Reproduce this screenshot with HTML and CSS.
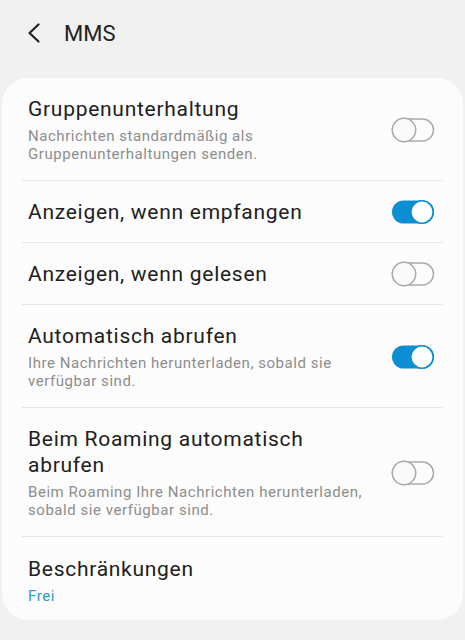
FILE: index.html
```html
<!DOCTYPE html>
<html lang="de">
<head>
<meta charset="utf-8">
<link rel="stylesheet" href="styles.css">
</head>
<body>
<header class="appbar">
  <svg class="back" width="14" height="20" viewBox="0 0 14 20"><polyline points="11.5,1.5 2.5,10 11.5,18.5" fill="none" stroke="#222" stroke-width="2.2" stroke-linecap="round" stroke-linejoin="round"/></svg>
  <h1 class="title">MMS</h1>
</header>
<main class="card">
  <div class="row">
    <div class="text">
      <div class="label">Gruppenunterhaltung</div>
      <div class="sub">Nachrichten standardmäßig als Gruppenunterhaltungen senden.</div>
    </div>
    <svg class="toggle" width="44" height="26" viewBox="0 0 44 26"><rect x="1.5" y="2" width="41" height="22" rx="11" fill="none" stroke="#a9a9a9" stroke-width="1.5"/><circle cx="13" cy="13" r="11.7" fill="#fafafa" stroke="#a9a9a9" stroke-width="1.5"/></svg>
  </div>
  <div class="row">
    <div class="text"><div class="label">Anzeigen, wenn empfangen</div></div>
    <svg class="toggle" width="44" height="26" viewBox="0 0 44 26"><rect x="1" y="1.5" width="42" height="23" rx="11.5" fill="#0b8fd2"/><circle cx="31" cy="13" r="11.2" fill="#fff" stroke="#0b8fd2" stroke-width="1.6"/></svg>
  </div>
  <div class="row">
    <div class="text"><div class="label">Anzeigen, wenn gelesen</div></div>
    <svg class="toggle" width="44" height="26" viewBox="0 0 44 26"><rect x="1.5" y="2" width="41" height="22" rx="11" fill="none" stroke="#a9a9a9" stroke-width="1.5"/><circle cx="13" cy="13" r="11.7" fill="#fafafa" stroke="#a9a9a9" stroke-width="1.5"/></svg>
  </div>
  <div class="row">
    <div class="text">
      <div class="label">Automatisch abrufen</div>
      <div class="sub">Ihre Nachrichten herunterladen, sobald sie verfügbar sind.</div>
    </div>
    <svg class="toggle" width="44" height="26" viewBox="0 0 44 26"><rect x="1" y="1.5" width="42" height="23" rx="11.5" fill="#0b8fd2"/><circle cx="31" cy="13" r="11.2" fill="#fff" stroke="#0b8fd2" stroke-width="1.6"/></svg>
  </div>
  <div class="row">
    <div class="text">
      <div class="label">Beim Roaming automatisch abrufen</div>
      <div class="sub">Beim Roaming Ihre Nachrichten herunterladen, sobald sie verfügbar sind.</div>
    </div>
    <svg class="toggle" width="44" height="26" viewBox="0 0 44 26"><rect x="1.5" y="2" width="41" height="22" rx="11" fill="none" stroke="#a9a9a9" stroke-width="1.5"/><circle cx="13" cy="13" r="11.7" fill="#fafafa" stroke="#a9a9a9" stroke-width="1.5"/></svg>
  </div>
  <div class="row last">
    <div class="text">
      <div class="label">Beschränkungen</div>
      <div class="sub accent">Frei</div>
    </div>
  </div>
</main>
</body>
</html>
```
FILE: styles.css
```css
html, body {
  margin: 0;
  padding: 0;
  background: #f1f1f1;
  font-family: Roboto, "Liberation Sans", sans-serif;
  color: #202020;
}
.appbar {
  display: flex;
  align-items: center;
  height: 64px;
  padding-left: 27px;
  box-sizing: border-box;
  padding-top: 2px;
}
.back {
  display: block;
  margin-right: 23px;
}
.title {
  margin: 0;
  font-size: 22px;
  font-weight: 400;
  color: #222;
  letter-spacing: 0.1px;
}
.card {
  margin: 14px 2px 0;
  background: #fcfcfc;
  border-radius: 26px;
  padding: 0 20px 0 20px;
}
.row {
  display: flex;
  align-items: center;
  border-bottom: 1px solid #e6e6e6;
  padding: 18px 0 17px 6px;
  min-height: 26px;
}
.row.last {
  border-bottom: none;
  padding-top: 19px;
  padding-bottom: 15px;
}
.text {
  flex: 1;
  min-width: 0;
  padding-right: 14px;
}
.label {
  font-size: 21px;
  line-height: 26px;
  letter-spacing: 0.72px;
}
.sub {
  margin-top: 5px;
  font-size: 15px;
  line-height: 18px;
  letter-spacing: 0.55px;
  color: #8d8d8d;
}
.sub.accent {
  color: #3399bf;
}
.toggle {
  display: block;
  flex: none;
  margin-right: 8px;
}
```
